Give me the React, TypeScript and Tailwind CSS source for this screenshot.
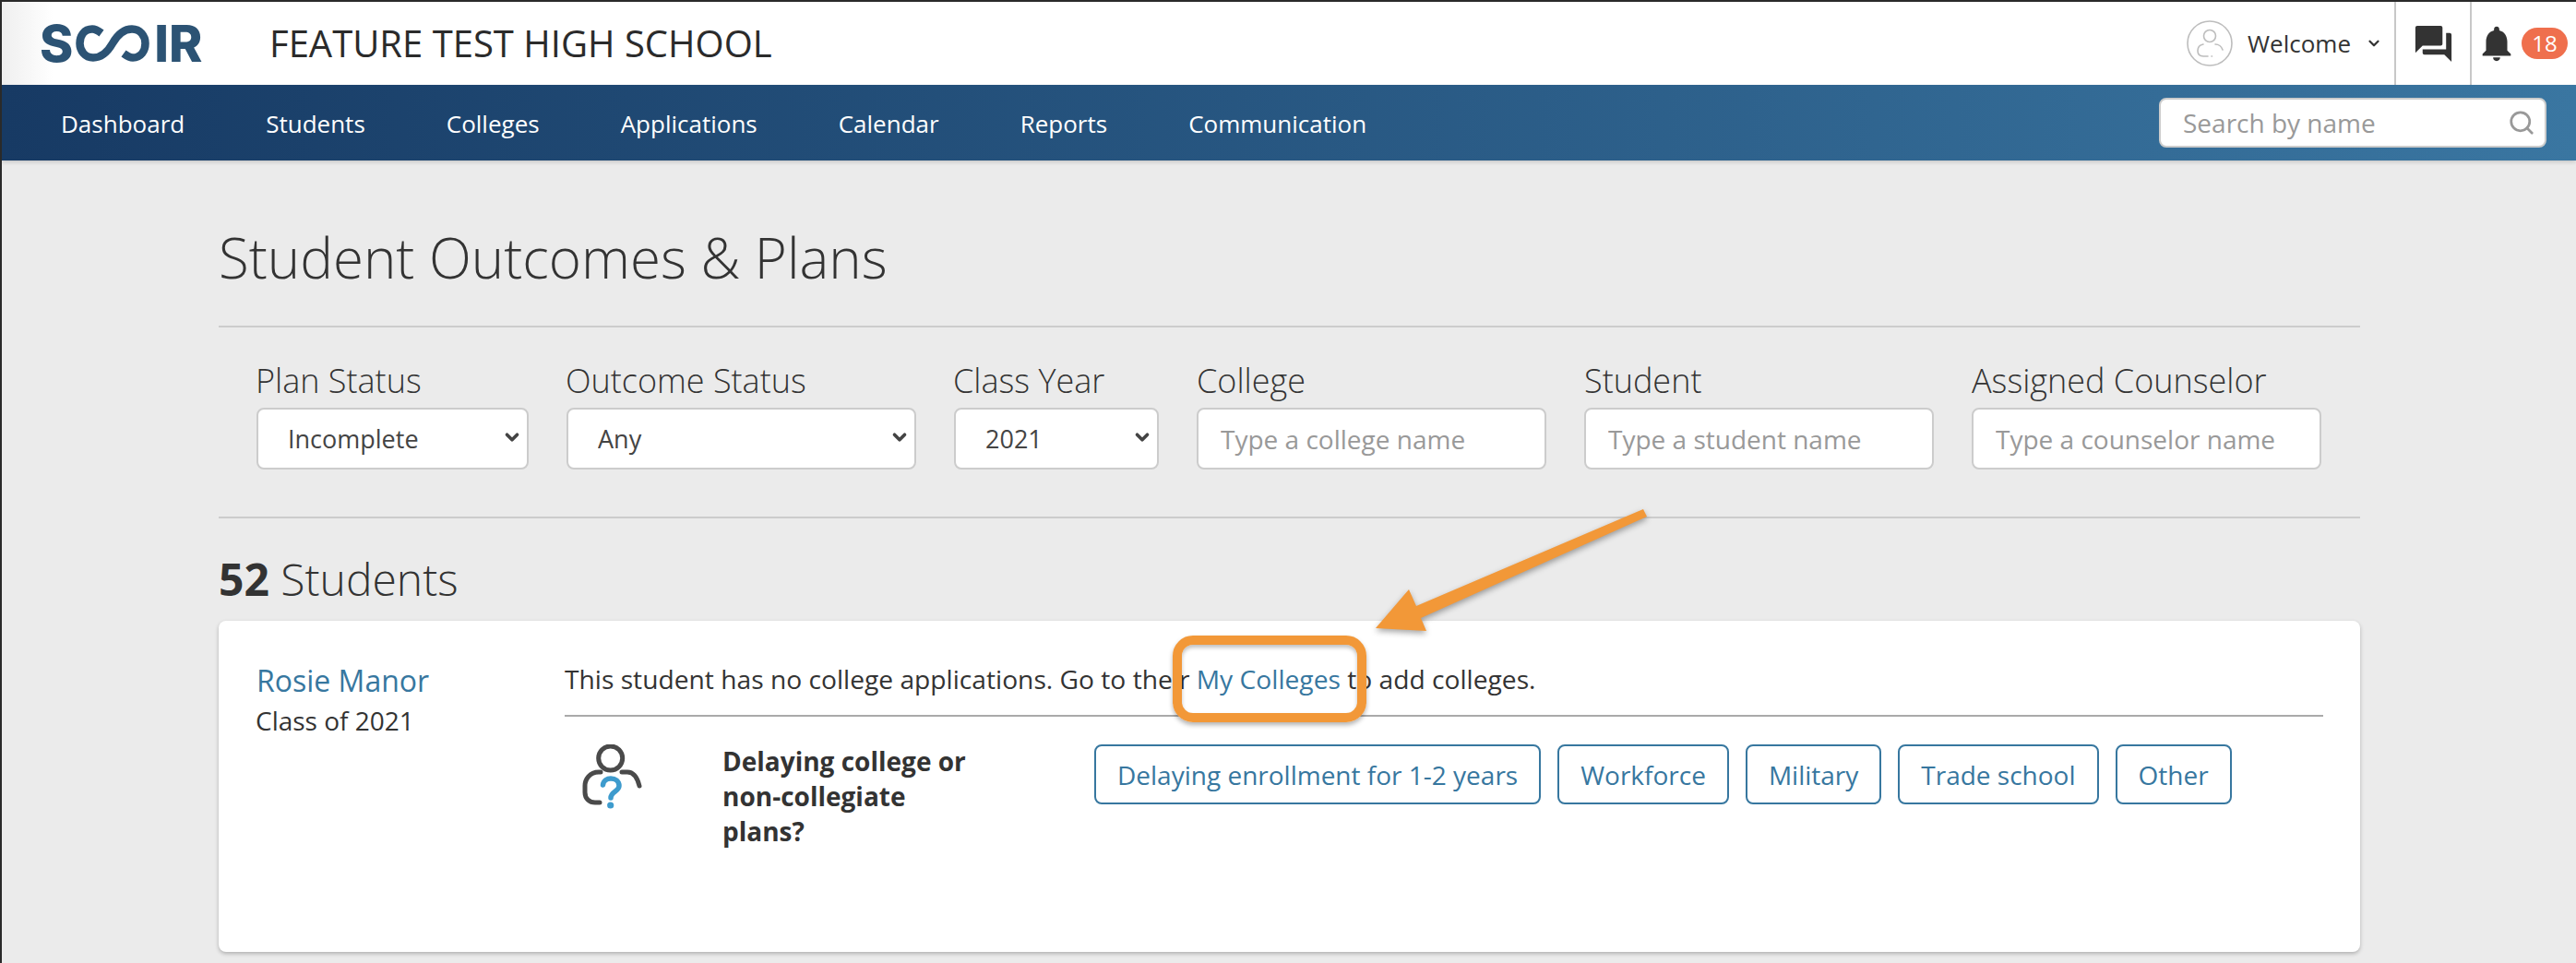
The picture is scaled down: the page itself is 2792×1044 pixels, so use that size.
import React from 'react';
import { ChevronDown, Search } from 'lucide-react';
import { MdForum, MdNotifications } from 'react-icons/md';

const navItems = ['Dashboard', 'Students', 'Colleges', 'Applications', 'Calendar', 'Reports', 'Communication'];
const planOptions = ['Delaying enrollment for 1-2 years', 'Workforce', 'Military', 'Trade school', 'Other'];

const Logo = () => (
  <div className="flex items-center text-[#2c5374] font-['Inter',sans-serif] font-extrabold text-[55px] leading-[40px] w-[172px]">
    <span>S</span>
    <svg width="80" height="40" viewBox="0 0 80 40" fill="none" stroke="#2c5374" strokeWidth="8.5" strokeLinecap="butt" className="ml-[3px] shrink-0">
      <path d="M28 9 C24 6 21 4.5 18 4.5 C9 4.5 4.5 12 4.5 20 C4.5 28 10 35.5 19 35.5 C30 35.5 36 27 40 20 C44 13 50 4.5 61 4.5 C70 4.5 75.5 12 75.5 20 C75.5 28 71 35.5 62 35.5 C59 35.5 56 34 52 31" />
    </svg>
    <span className="ml-[5px]">IR</span>
  </div>
);

const Avatar = () => (
  <svg width="50" height="50" viewBox="0 0 50 50" fill="none" stroke="#bdbdbd" strokeWidth="1.6" strokeLinecap="round">
    <circle cx="25" cy="25" r="24" />
    <circle cx="25" cy="17" r="6.5" />
    <path d="M18 26 C13 27 12 30 12 33 C12 37 14 39 18 39 H23" />
    <path d="M31 26 C35 26 38 29 39 32" />
    <path d="M27 39 H27.5" />
  </svg>
);

const PersonQuestion = () => (
  <svg width="70" height="70" viewBox="20 18 70 70" fill="none" strokeLinecap="round" className="shrink-0">
    <circle cx="52.7" cy="33" r="13" stroke="#4a4a4a" strokeWidth="5" />
    <path d="M42 48 H40 C30 48 25 56 25 63 V70 C25 77 30 81 36 81 H41" stroke="#4a4a4a" strokeWidth="5" />
    <path d="M65 48 H71 C78 48 82 55 84 63" stroke="#4a4a4a" strokeWidth="5" />
    <path d="M44.5 62 C45 57 49 55 53 55 C58 55 62 58 62 63 C62 69 53 69 53 76" stroke="#3e9bcd" strokeWidth="5.5" />
    <circle cx="52.7" cy="84" r="3.6" fill="#3e9bcd" />
  </svg>
);

const FilterSelect = ({ label, value, width }: { label: string; value: string; width: string }) => (
  <div className={`flex flex-col ${width}`}>
    <label className="text-[36px] font-light leading-[48px] mb-[4px] -mt-[1px] -ml-[1px] text-[#333] whitespace-nowrap">{label}</label>
    <div className="relative mt-[1px]">
      <select
        defaultValue={value}
        className="w-full h-[67px] appearance-none bg-white rounded-[8px] border-2 border-[#ccc] pl-[32px] pt-[2px] text-[27px] text-[#444] outline-none"
      >
        <option>{value}</option>
      </select>
      <ChevronDown className="absolute right-[7px] top-[21px] w-[22px] h-[22px] text-[#444]" strokeWidth={4} />
    </div>
  </div>
);

const FilterInput = ({ label, placeholder }: { label: string; placeholder: string }) => (
  <div className="flex flex-col w-[379px]">
    <label className="text-[36px] font-light leading-[48px] mb-[4px] -mt-[1px] text-[#333] whitespace-nowrap">{label}</label>
    <input
      placeholder={placeholder}
      className="w-full h-[67px] mt-[1px] bg-white rounded-[8px] border-2 border-[#ccc] pl-[24px] text-[28px] outline-none placeholder:text-[#999]"
    />
  </div>
);

export default function App() {
  return (
    <div className="relative w-full h-[1044px] overflow-hidden bg-[#ebebeb] font-['Open_Sans',sans-serif] text-[#333] border-t-2 border-l-2 border-[#2a2a2a]">
      {/* top bar */}
      <header className="h-[90px] flex items-center bg-gradient-to-r from-[#efefef] via-white via-[2%] to-white">
        <div className="ml-[41px]">
          <Logo />
        </div>
        <h1 className="ml-[77px] text-[40px] leading-none text-[#2b2b2b] whitespace-nowrap">FEATURE TEST HIGH SCHOOL</h1>
        <div className="ml-auto flex items-stretch h-full">
          <div className="flex items-center pr-[13px]">
            <Avatar />
            <span className="ml-[16px] text-[26px] text-[#333]">Welcome</span>
            <ChevronDown className="ml-[16px] w-[18px] h-[18px] text-[#333]" strokeWidth={3} />
          </div>
          <div className="w-[82px] border-l-2 border-[#c8c8c8] flex items-center justify-center">
            <MdForum className="w-[47px] h-[47px] text-[#333]" />
          </div>
          <div className="w-[115px] border-l-2 border-[#c8c8c8] flex items-center pl-[4px]">
            <MdNotifications className="w-[46px] h-[46px] text-[#333] shrink-0" />
            <span className="ml-[4px] w-[50px] h-[34px] rounded-full bg-[#ef6f4d] text-white text-[24px] flex items-center justify-center">18</span>
          </div>
        </div>
      </header>

      {/* main nav */}
      <nav className="relative h-[82px] flex items-center justify-between pl-[64px] pr-[32px] bg-gradient-to-r from-[#173a64] to-[#3a76a1] shadow-[0_2px_4px_rgba(0,0,0,0.15)]">
        <ul className="flex gap-[88px] text-[26px] text-white mt-[3px]">
          {navItems.map((item) => (
            <li key={item} className="whitespace-nowrap">{item}</li>
          ))}
        </ul>
        <div className="relative w-[420px]">
          <input
            placeholder="Search by name"
            className="w-full h-[54px] bg-white rounded-[8px] border-2 border-[#ccc] pl-[24px] text-[28px] outline-none placeholder:text-[#999]"
          />
          <Search className="absolute right-[12px] top-[12px] w-[30px] h-[30px] text-[#999]" strokeWidth={2.2} />
        </div>
      </nav>

      <main className="ml-[235px] w-[2321px]">
        <div className="h-[181px] border-b-2 border-[#ccc] flex items-end pb-[34px]">
          <h2 className="text-[60px] font-light leading-[80px] text-[#333]">Student Outcomes &amp; Plans</h2>
        </div>

        <div className="h-[207px] border-b-2 border-[#ccc] flex gap-[41px] pl-[41px] pt-[35px]">
          <FilterSelect label="Plan Status" value="Incomplete" width="w-[295px]" />
          <FilterSelect label="Outcome Status" value="Any" width="w-[379px]" />
          <FilterSelect label="Class Year" value="2021" width="w-[222px]" />
          <FilterInput label="College" placeholder="Type a college name" />
          <FilterInput label="Student" placeholder="Type a student name" />
          <FilterInput label="Assigned Counselor" placeholder="Type a counselor name" />
        </div>

        <div className="h-[111px] flex items-end pb-[13px] text-[48px] font-light leading-[64px] text-[#333]">
          <span><b className="font-bold">52</b> Students</span>
        </div>

        <section className="h-[359px] bg-white rounded-[8px] shadow-[0_2px_4px_rgba(0,0,0,0.25)] flex pt-[43px] pl-[41px] pr-[40px]">
          <div className="w-[335px] shrink-0">
            <a className="block text-[32px] leading-[44px] text-[#37779f]">Rosie Manor</a>
            <div className="text-[28px] leading-[38px] -ml-[1px] mt-[2px]">Class of 2021</div>
          </div>
          <div className="flex-1">
            <p className="text-[28.2px] leading-[44px] -ml-[1px] pb-[17px] border-b-2 border-[#aaa] -mt-[2px]">
              This student has no college applications. Go to their <a className="text-[#37779f]">My Colleges</a> to add colleges.
            </p>
            <div className="flex mt-[30px]">
              <div className="ml-[16px] w-[154px] shrink-0">
                <PersonQuestion />
              </div>
              <div className="w-[403px] shrink-0 text-[28px] font-bold leading-[38px] -mt-[1px]">
                Delaying college or<br />non-collegiate<br />plans?
              </div>
              <div className="flex gap-[18px] items-start">
                {planOptions.map((opt) => (
                  <button key={opt} className="h-[65px] px-[23px] rounded-[8px] border-2 border-[#37779f] text-[28px] text-[#37779f] whitespace-nowrap bg-white">
                    {opt}
                  </button>
                ))}
              </div>
            </div>
          </div>
        </section>
      </main>

      {/* annotation drawn over the page */}
      <div className="absolute left-[1269px] top-[687px] w-[210px] h-[94px] rounded-[22px] border-[10px] border-[#f29838] shadow-[0_3px_5px_rgba(0,0,0,0.3),inset_0_3px_4px_rgba(0,0,0,0.25)] pointer-events-none" />
      <svg className="absolute left-[1480px] top-[540px] pointer-events-none drop-shadow-[0_3px_3px_rgba(0,0,0,0.35)]" width="320" height="160" viewBox="1482 542 320 160">
        <polygon points="1781,552 1785,560 1540,670 1546,684 1491,681 1527,639 1535,657" fill="#f29838" />
      </svg>
    </div>
  );
}
